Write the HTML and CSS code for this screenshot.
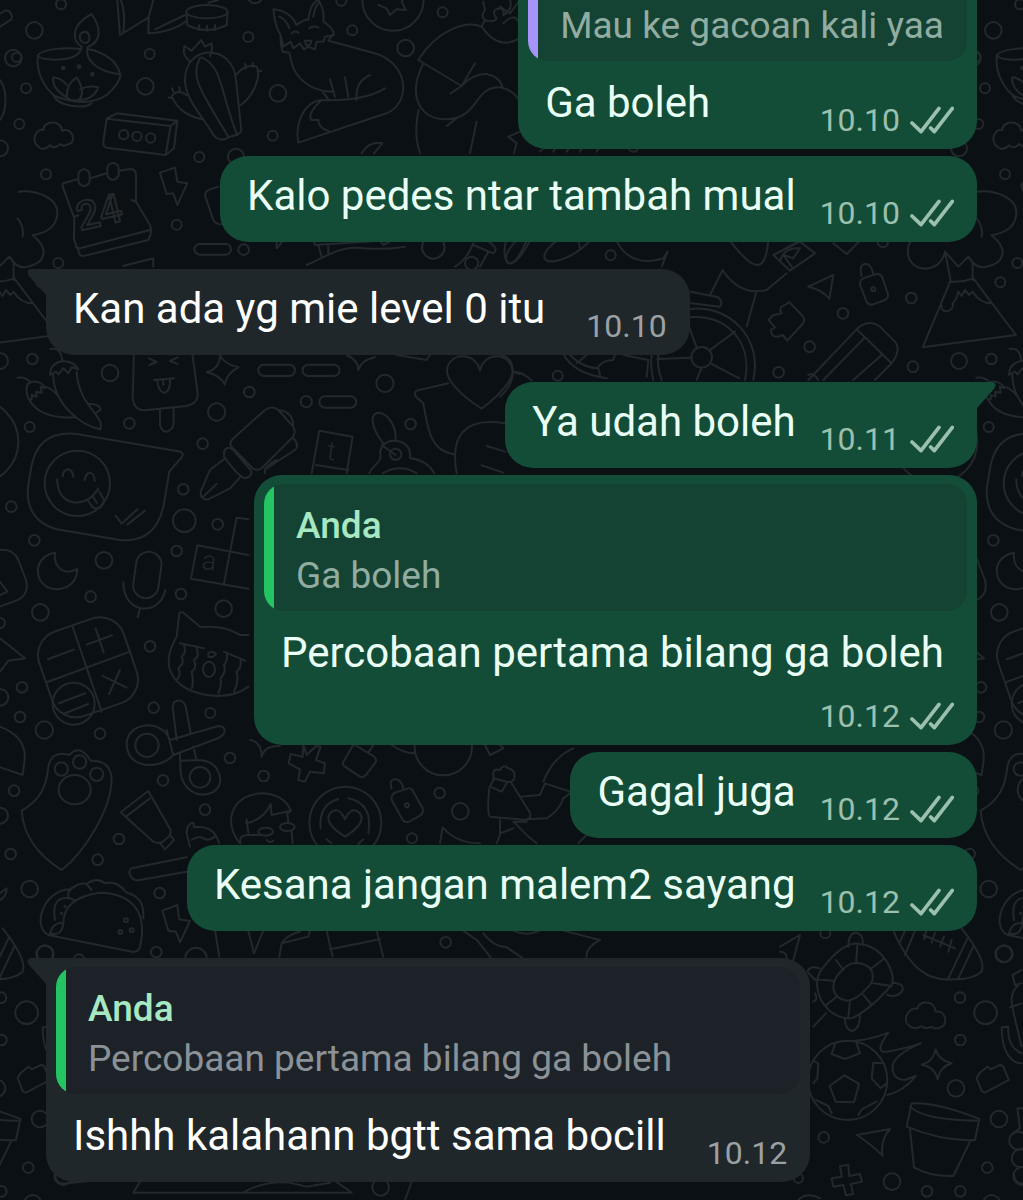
FILE: index.html
```html
<!DOCTYPE html>
<html lang="id">
<head>
  <meta charset="UTF-8" />
  <meta name="viewport" content="width=device-width, initial-scale=1.0" />
  <title>Chat</title>
  <link rel="stylesheet" href="styles.css">
</head>
<body>
  <!-- wallpaper doodles, the tile repeats every 959px -->
  <svg class="wallpaper" aria-hidden="true">
    <defs>
      <g id="doodles">
        <!-- top left -->
        <g transform="scale(.3333)">
          <circle cx="183" cy="13" r="15"/><circle cx="103" cy="91" r="25"/><circle cx="40" cy="174" r="25"/>
          <circle cx="449" cy="162" r="15"/><circle cx="436" cy="259" r="25"/><circle cx="78" cy="265" r="15"/>
          <circle cx="58" cy="372" r="15"/><circle cx="745" cy="111" r="15"/><circle cx="834" cy="280" r="25"/>
          <circle cx="818" cy="407" r="15"/><circle cx="598" cy="471" r="15"/><circle cx="708" cy="470" r="24"/>
          <circle cx="138" cy="523" r="15"/><circle cx="530" cy="674" r="15"/><circle cx="731" cy="749" r="16"/>
          <circle cx="175" cy="789" r="15"/><circle cx="1057" cy="91" r="15"/><circle cx="1217" cy="144" r="25"/>
          <circle cx="1328" cy="37" r="15"/><circle cx="1024" cy="2" r="15"/><circle cx="765" cy="-12" r="22"/>
          <circle cx="1300" cy="742" r="34"/><circle cx="0" cy="445" r="24"/>
          <path d="M0 40L15 32C30 28 40 48 34 58L0 80M0 240C22 270 22 330 0 360"/>
          <!-- oil lamp -->
          <path d="M245 140C215 120 212 75 275 42C305 85 305 125 262 142M241 120C235 100 248 95 258 95C270 102 272 118 262 128Q250 132 241 120M245 140Q240 180 160 179Q115 177 114 165C130 145 200 142 245 147M262 142C255 180 290 215 360 223C355 185 310 155 262 147M114 165C105 220 140 270 165 288Q260 325 320 285Q360 250 362 223M160 285C175 320 250 328 275 310M200 292Q155 265 160 232Q185 235 200 255M200 292Q200 250 230 232Q260 280 235 300Q215 305 200 292M240 270Q260 255 295 262Q280 300 235 300"/>
          <circle cx="190" cy="204" r="4"/><circle cx="237" cy="200" r="4"/><circle cx="277" cy="223" r="4"/>
          <!-- book and drum -->
          <path d="M352 0L360 105L446 52L460 0M446 52L445 100Q520 95 560 62M370 95Q378 40 362 0M465 88L555 45M625 8L655 0"/>
          <ellipse cx="621" cy="35" rx="62" ry="20"/>
          <path d="M559 35L562 75Q620 105 680 75L683 35M597 90V75M621 92V77M645 90V75"/>
          <!-- cactus -->
          <path d="M555 240C555 130 700 130 708 240L724 390Q722 405 690 410Q660 430 640 405C610 350 555 300 555 240M600 175C570 230 600 270 685 410M605 172C670 200 660 280 712 405M570 185C545 160 552 155 553 138L575 152L604 120L615 140L634 130Q640 150 630 168M708 225Q735 190 770 200C785 230 760 290 722 315M738 205L735 192M758 200V188M772 215L784 212M606 358C550 345 530 320 515 290Q530 265 560 285M520 275L516 265M540 272L538 262M515 295L506 292"/>
          <!-- cloud -->
          <path d="M115 440C90 420 110 385 130 390C130 360 185 360 186 392C220 380 230 430 205 432Q190 442 180 432Q165 450 150 436Q130 455 115 440"/>
          <!-- speaker box -->
          <path d="M320 356L512 378L497 465L320 443Q308 440 310 425ZM320 356L350 340L532 362L512 378M532 362L522 445L497 465"/>
          <circle cx="371" cy="404" r="14"/><circle cx="411" cy="409" r="14"/><circle cx="452" cy="414" r="14"/>
          <!-- calendar -->
          <path d="M232 538L190 550Q185 555 190 565L223 655L222 720L240 765Q245 770 255 767L445 720Q458 700 450 675L408 605V525Q408 507 390 507L358 512M270 535L320 520M228 742L240 745L450 690M222 650L235 646M395 600L408 605"/>
          <rect x="235" y="508" width="34" height="50" rx="17"/><rect x="322" y="489" width="34" height="50" rx="17"/>
          <text class="doodle-number" x="240" y="692" transform="rotate(-13 240 692)">24</text>
          <!-- bolt -->
          <path d="M480 518L525 503L532 545L562 550L532 615L520 580L500 582Z"/>
          <rect x="583" y="732" width="110" height="32" rx="16"/>
          <!-- fox -->
          <path d="M820 28Q870 32 890 75Q915 55 925 60Q930 10 955 0Q975 30 970 65Q995 80 1002 100L985 122Q1110 155 1135 163C1230 200 1230 310 1160 340L895 428C885 370 910 310 960 300Q1090 305 1155 265M820 28Q825 80 842 105Q840 130 848 155L868 158Q875 200 890 222Q930 275 1000 275M842 105L850 140L872 125L880 145L900 130L912 148L925 140L945 148L950 125L970 125L975 110L1002 105M960 305Q920 345 935 360H955Q955 385 985 392M990 238L1005 290M1035 232L1045 290M1110 225Q1065 245 1070 300M875 100Q885 90 895 98M928 85Q940 75 955 83M915 122H935Q932 140 918 135ZM838 50Q860 60 868 85M940 50Q945 20 955 10M970 278L985 298"/>
          <circle cx="1179" cy="0" r="92"/>
          <path d="M1135 15L1160 25L1170 45L1190 28L1218 30L1205 5L1215 -10"/>
          <!-- sleeping figure -->
          <path d="M1255 180C1310 90 1400 60 1445 80M1255 180L1385 258Q1420 220 1460 222Q1500 230 1508 262M1425 190L1385 258L1352 280M1270 190C1220 290 1260 360 1345 358C1440 350 1420 260 1500 262Q1540 270 1556 300M1340 378L1370 355M1256 330Q1240 400 1260 460M1430 365L1410 460M1445 80Q1480 130 1520 128Q1550 125 1560 110M1445 80L1455 60Q1440 50 1455 30L1450 5M1455 60Q1480 70 1490 55Q1470 30 1500 25Q1515 30 1510 45Q1540 30 1530 0"/>
          <path d="M1085 460Q1110 420 1147 430L1122 460M655 560L625 570Q610 580 618 595L640 660Q650 675 665 672"/>
          <path d="M830 720V745L850 722M940 722L945 735L1140 722M955 735L965 770M985 735V765M920 795C980 770 1020 735 1090 745Q1150 750 1215 740M1140 722L1150 735L1170 725M1365 800Q1400 780 1420 730M1440 800L1465 755M1420 735L1480 760Q1500 745 1460 722M1518 722Q1505 780 1530 790Q1550 790 1580 722"/>
          <circle cx="1415" cy="790" r="20"/>
        </g>

        <!-- between the bubbles, upper right -->
        <g transform="translate(500 0) scale(.3333)">
          <path d="M0 20L30 40L60 0M10 70Q50 30 60 80M25 410L60 395M25 410L50 430L42 460M120 455L135 440M160 455L170 440M200 455L210 440M240 455L250 440M290 455L300 440"/>
          <circle cx="1427" cy="172" r="14"/><circle cx="400" cy="440" r="15"/><circle cx="332" cy="766" r="15"/><circle cx="1149" cy="727" r="15"/>
          <!-- tree -->
          <path d="M1433 575C1480 570 1560 590 1548 650Q1540 695 1475 706C1530 750 1510 790 1460 800Q1430 810 1405 770L1375 800L1335 755C1320 830 1210 820 1225 740Q1228 725 1240 720M1430 655Q1450 680 1445 710M1335 755L1352 840M1418 790V840"/>
          <path d="M50 722C10 760 10 795 35 790Q60 780 90 722M170 722C110 770 130 795 180 780Q230 765 270 722M235 722L240 745M350 722C380 790 450 790 490 775L503 755L485 800M690 722Q760 815 785 790Q800 775 805 722M822 765L900 722M1000 730L1040 762L1080 722"/>
          <path d="M820 765L900 725L945 760L870 812ZM840 785Q850 740 900 745L880 775L850 765L875 800"/>
        </g>

        <!-- left, below the first grey bubble -->
        <g transform="translate(0 230) scale(.3333)">
          <circle cx="97" cy="387" r="16"/><circle cx="330" cy="429" r="25"/><circle cx="748" cy="486" r="16"/>
          <circle cx="650" cy="546" r="26"/><circle cx="919" cy="515" r="17"/><circle cx="1155" cy="460" r="26"/>
          <circle cx="1232" cy="582" r="16"/><circle cx="388" cy="580" r="16"/><circle cx="89" cy="591" r="15"/>
          <circle cx="608" cy="641" r="16"/><circle cx="0" cy="393" r="24"/><circle cx="-70" cy="635" r="125"/>
          <!-- chillies -->
          <path d="M152 357Q180 350 187 390M150 435Q150 400 187 393Q225 395 235 418L215 412L205 430L190 415L175 433L168 425ZM160 435C160 520 240 585 300 598C320 560 235 530 230 425M52 443Q80 440 92 458M80 490Q75 450 110 455Q130 460 135 475L122 470L125 488L108 485L110 500L95 495Q100 515 85 505ZM88 510C110 550 160 565 225 562M135 470Q155 475 172 495M265 522Q300 520 302 540L285 550"/>
          <!-- popsicle -->
          <path d="M402 370L398 500Q400 545 440 540L560 528Q595 520 593 490L577 370M480 540V585Q485 605 500 605Q520 600 521 580V535M447 385L470 396L448 405M533 382L510 393L533 402M462 450L522 445M472 450Q475 485 492 488Q512 485 510 447M490 450V465"/>
          <path d="M660 375Q668 400 715 412Q680 430 674 464Q660 435 620 427Q660 415 660 375M1040 375Q1075 390 1075 420Q1085 390 1125 382M1190 375L1280 390L1290 375"/>
          <rect x="775" y="404" width="110" height="34" rx="17"/><rect x="908" y="404" width="111" height="34" rx="17"/><rect x="958" y="499" width="111" height="34" rx="17"/>
          <!-- heart -->
          <path d="M1445 536C1380 495 1340 450 1341 420C1345 370 1425 360 1440 422C1455 360 1530 370 1538 420C1540 450 1500 495 1445 536M1345 460L1250 482Q1240 488 1248 500L1270 520C1285 600 1290 660 1360 673M1370 730C1350 620 1390 560 1515 580M1460 648L1515 665M1445 706L1510 728M1538 425L1560 432"/>
          <!-- marker pen -->
          <path d="M795 540Q815 525 835 540L880 590Q890 610 875 625L785 715Q765 725 755 712L695 650Q685 640 700 625ZM835 540Q880 545 880 590M880 625Q900 645 885 660L795 718M672 665Q680 645 700 660L752 720Q760 740 735 745Q715 740 672 680ZM675 685L630 720L602 785Q602 812 625 808L690 775L720 742M610 800L650 762"/>
          <path d="M958 602L1058 620L1040 730M958 602L935 730M948 705L1045 720"/>
          <text class="doodle-letter" x="978" y="688" transform="rotate(8 978 688)">t</text>
          <!-- rabbit -->
          <path d="M1150 640C1110 590 1110 550 1135 548C1165 550 1190 590 1187 632M1108 730C1120 700 1150 700 1140 665Q1150 630 1190 632Q1235 640 1230 685Q1280 690 1303 730M1148 730Q1200 700 1250 730M1145 645L1187 675"/>
          <circle cx="1187" cy="673" r="17"/><circle cx="550" cy="778" r="16"/>
          <path d="M370 108L460 85V110M795 730Q790 710 830 690"/>
        </g>

        <!-- middle right -->
        <g transform="translate(500 240) scale(.3333)">
          <circle cx="1234" cy="174" r="16"/><circle cx="1029" cy="220" r="16"/><circle cx="929" cy="320" r="16"/>
          <circle cx="836" cy="397" r="16"/><circle cx="1239" cy="380" r="16"/>
          <circle cx="1501" cy="127" r="15"/><circle cx="173" cy="407" r="15"/>
          <circle cx="1120" cy="148" r="6"/>
          <!-- mountain -->
          <path d="M1352 122L1268 322L1548 285L1420 115Q1385 128 1348 125M1325 195C1320 225 1365 215 1358 190Q1370 180 1375 155L1385 168L1395 150L1408 165L1418 155Q1440 190 1475 190"/>
          <!-- padlock, plane, puzzle, pencil -->
          <path d="M1085 108Q1075 70 1100 72Q1115 75 1120 102M1095 113L1130 102Q1142 100 1147 112L1164 162Q1166 175 1155 180L1118 194Q1105 196 1100 185L1080 135Q1078 118 1095 113"/>
          <path d="M925 140L1000 105L988 177Q970 150 925 140M820 225L845 220Q835 200 850 198L868 186L905 225Q920 240 905 255L862 302L848 285Q815 300 812 270L825 262L806 240Z"/>
          <path d="M925 420L1070 268Q1105 235 1140 260L1185 305Q1205 330 1175 370L1125 420M1070 268L1175 370M970 420L1095 292M1060 420L1145 345M925 405Q940 395 955 420"/>
          <!-- wheel -->
          <path d="M455 342Q450 380 460 420M475 342Q470 380 485 420M570 208C680 190 790 290 760 420M570 232C670 220 760 300 735 420M568 262L590 322M630 330L705 275M573 353L472 357M635 372L718 415M605 383L590 420"/>
          <circle cx="605" cy="352" r="31"/>
          <path d="M573 155L655 172Q670 185 660 200L573 190M630 165L668 90Q720 170 800 150L860 100M768 160L740 260M190 342Q220 400 320 415M210 345Q250 385 295 385L300 405M295 380Q310 360 340 360L345 342M230 370L260 345M370 345L445 360L440 410M0 345Q40 350 38 400Q35 440 0 470M38 395Q70 395 95 422"/>
        </g>

        <!-- left middle -->
        <g transform="translate(0 420) scale(.3333)">
          <circle cx="34" cy="260" r="16"/><circle cx="553" cy="302" r="34"/><circle cx="653" cy="313" r="16"/>
          <circle cx="103" cy="361" r="16"/><circle cx="312" cy="421" r="25"/><circle cx="530" cy="393" r="16"/>
          <circle cx="272" cy="530" r="16"/><circle cx="121" cy="577" r="25"/><circle cx="543" cy="522" r="16"/>
          <circle cx="671" cy="566" r="25"/><circle cx="450" cy="679" r="16"/><circle cx="66" cy="802" r="16"/>
          <circle cx="0" cy="832" r="25"/><circle cx="60" cy="891" r="16"/><circle cx="133" cy="930" r="26"/>
          <circle cx="300" cy="941" r="16"/><circle cx="461" cy="863" r="16"/><circle cx="631" cy="879" r="15"/><circle cx="0" cy="609" r="15"/>
          <!-- speech bubble with smiley -->
          <path d="M94 140Q115 30 230 42L535 94Q555 98 545 112L508 155L492 250Q470 370 360 360L170 328Q75 300 84 200Z"/>
          <circle cx="232" cy="190" r="98"/>
          <path d="M188 168Q190 148 205 148Q218 152 220 170M254 180Q258 158 270 158Q284 162 284 182M172 178C170 260 260 270 295 205M263 240L278 262Q305 275 312 240L298 215M278 228L290 248M347 288L365 311L412 268M382 314L435 272"/>
          <!-- microphone -->
          <rect x="404" y="395" width="76" height="140" rx="38" transform="rotate(8 442 465)"/>
          <path d="M370 487C370 585 480 590 496 510M420 566L413 592M165 398C90 410 100 510 175 508Q230 500 232 447C190 470 160 440 165 398"/>
          <path d="M0 390Q40 385 55 420L78 480Q90 530 40 545L0 560M0 485L22 515L0 525M0 655L75 715L25 722L0 755"/>
          <!-- calculator -->
          <rect x="130" y="608" width="268" height="268" rx="75" transform="rotate(-19 264 742)"/>
          <path d="M217 618L305 875M140 787L390 695M144 718L221 689M260 674L336 646M287 625L311 697M308 768L380 803M360 750L327 822M177 850L256 820M189 882L265 852"/>
          <circle cx="221" cy="851" r="63"/>
          <!-- letter tiles -->
          <path d="M592 376L745 405M592 376L573 476L745 506M710 293L672 490M710 293L745 298"/>
          <text class="doodle-letter" x="603" y="446" transform="rotate(8 603 446)">a</text>
          <!-- crying cat -->
          <path d="M530 650L538 580Q542 572 552 580L602 622Q670 615 720 645L745 645M530 650C470 750 530 820 650 828Q710 828 745 800M540 670L612 685M672 695L735 722M552 675Q560 700 545 710Q555 730 535 745Q545 765 530 780M590 685Q600 710 582 720Q592 745 575 755Q582 790 575 805M680 700Q685 720 672 735Q680 755 662 775Q665 800 655 820M722 720Q725 745 710 755Q718 780 702 815M625 700Q635 690 648 702Q640 715 625 710Z"/>
          <ellipse cx="627" cy="748" rx="18" ry="23"/>
          <!-- scissors -->
          <path d="M530 960L518 860Q520 840 540 842Q555 845 558 865L572 940M510 960L655 918Q680 920 672 940Q668 950 640 960L520 1005M500 930L520 1005C480 1050 380 1050 380 970C385 900 490 900 510 960M540 1000L542 1060C560 1160 690 1130 655 1055Q640 1020 590 1020L580 980M545 1022L590 1020"/>
          <circle cx="441" cy="976" r="35"/><circle cx="600" cy="1072" r="31"/><circle cx="690" cy="1014" r="16"/>
          <path d="M0 920Q80 950 74 1020L68 1065L0 1042"/>
        </g>

        <!-- lower left -->
        <g transform="translate(0 740) scale(.3333)">
          <circle cx="42" cy="152" r="16"/><circle cx="489" cy="121" r="16"/><circle cx="615" cy="209" r="16"/>
          <circle cx="357" cy="297" r="16"/><circle cx="293" cy="359" r="16"/><circle cx="32" cy="342" r="16"/>
          <circle cx="89" cy="447" r="25"/><circle cx="479" cy="459" r="16"/><circle cx="791" cy="108" r="16"/>
          <circle cx="469" cy="636" r="16"/><circle cx="134" cy="642" r="25"/><circle cx="0" cy="227" r="24"/><circle cx="588" cy="655" r="32"/><circle cx="237" cy="658" r="15"/>
          <!-- paw -->
          <path d="M65 212C120 180 140 140 145 80Q155 30 208 45Q240 10 272 62Q330 60 335 115C335 210 250 340 185 390C120 350 70 290 65 212"/>
          <circle cx="184" cy="87" r="20"/><circle cx="239" cy="66" r="20"/><circle cx="290" cy="103" r="20"/>
          <ellipse cx="224" cy="149" rx="48" ry="44"/>
          <!-- tube, brush -->
          <path d="M445 153L362 217L460 305Q480 315 495 300Q515 285 512 270ZM450 175L378 230M482 312L495 328L522 300L510 285M560 352L395 385Q385 390 390 405Q400 425 420 420L560 395M570 320L560 280Q560 250 580 248L582 262Q630 255 650 290L658 310M575 300Q600 285 610 295Q625 305 645 290"/>
          <!-- taco -->
          <path d="M145 585L400 636Q420 635 422 610C440 520 400 460 300 458C210 470 190 510 190 550M145 585C95 560 130 450 210 448Q240 425 260 432Q290 410 315 430Q350 420 380 458Q435 470 430 535M165 540Q155 480 190 475Q215 470 225 485M205 475Q200 450 225 440M150 580Q160 545 190 550Q185 590 150 580M262 435L275 450"/>
          <circle cx="378" cy="541" r="6"/><circle cx="361" cy="576" r="6"/><circle cx="395" cy="571" r="6"/><circle cx="185" cy="520" r="2"/><circle cx="195" cy="500" r="2"/>
          <path d="M487 512L532 495L537 538L570 543L540 607L528 575L505 572ZM0 460L20 445Q20 470 0 480"/>
          <!-- cross, person -->
          <path d="M910 15L920 45L948 18L962 20L948 60L975 70L972 100L930 95L915 125L895 120L900 88L866 70L872 42L908 50Z"/>
          <path d="M720 310C670 250 690 170 780 160Q850 160 873 212L862 220L865 250M740 238L745 278M738 250Q790 240 812 192L815 225L873 212M722 310Q715 285 745 285L780 285M875 275L878 310M800 300Q810 310 820 302"/>
          <ellipse cx="797" cy="275" rx="22" ry="12"/><ellipse cx="862" cy="261" rx="22" ry="12"/>
          <path d="M750 0Q785 5 785 50Q795 15 840 18M645 570L658 650M745 572L762 640L790 572M838 650L845 610L925 590L930 572M848 605Q870 580 900 575M980 572L998 650M990 628L1140 598M1130 572L1150 650"/>
        </g>

        <!-- lower middle -->
        <g transform="translate(280 720) scale(.3333)">
          <circle cx="479" cy="219" r="16"/><circle cx="541" cy="274" r="25"/><circle cx="396" cy="355" r="15"/><circle cx="497" cy="667" r="16"/><circle cx="381" cy="256" r="6"/><circle cx="490" cy="80" r="86"/>
          <circle cx="196" cy="308" r="108"/>
          <path d="M195 350Q130 310 150 280Q175 255 195 298Q215 255 240 280Q260 310 195 350M122 325Q115 255 175 237M205 235Q280 250 265 340M140 358L155 370M250 358L235 372"/>
          <path d="M335 205Q325 175 350 178Q365 182 370 205M345 218L385 205Q395 203 400 215L428 265Q432 280 420 287L388 305Q375 310 367 298L335 240Q333 225 345 218"/>
          <path d="M220 75L190 125Q185 135 195 140L240 170Q250 175 258 165L288 125Q290 115 280 108L225 75M265 98L280 75M335 75Q370 100 405 100M615 75L630 105L670 85L660 75"/>
          <!-- sitting figure -->
          <path d="M640 160Q640 145 660 150Q670 130 685 145Q705 150 704 170Q700 190 680 185L640 175ZM640 180L630 200L665 215L680 190M628 205Q620 280 630 290L740 300Q760 290 745 270L695 190M720 230L780 225L795 190Q810 195 870 215M790 185Q820 110 880 85M740 298L800 295Q840 270 850 235L870 220M660 300V345L650 370M740 305L700 305L745 350L770 370M660 340L700 325M480 370L488 322Q530 370 600 370M895 370L920 345"/>
          <path d="M550 632L590 660L632 712M610 640Q640 680 680 682L725 712M700 632Q740 650 780 632M850 632L960 660Q915 685 920 712"/>
        </g>

        <!-- bottom right -->
        <g transform="translate(780 920) scale(.3333)">
          <circle cx="136" cy="40" r="15"/><circle cx="673" cy="101" r="25"/><circle cx="540" cy="233" r="16"/>
          <circle cx="617" cy="278" r="34"/><circle cx="541" cy="360" r="16"/><circle cx="528" cy="505" r="25"/>
          <circle cx="657" cy="597" r="25"/><circle cx="131" cy="652" r="16"/><circle cx="622" cy="743" r="16"/>
          <circle cx="336" cy="785" r="25"/><circle cx="441" cy="814" r="16"/><circle cx="541" cy="814" r="16"/><circle cx="635" cy="850" r="25"/><circle cx="55" cy="775" r="14"/>
          <!-- turtle -->
          <path d="M120 155Q190 60 240 72C310 80 350 160 335 195Q270 270 215 295C140 300 90 210 120 155M170 170Q205 120 240 130C290 140 285 185 260 205Q230 240 200 242C160 235 150 200 170 170M205 80Q205 38 230 38Q252 45 248 75M338 188Q372 190 368 210Q355 235 322 225M195 298Q195 330 218 333Q240 325 240 285M118 145Q90 135 82 155L105 180M232 75L228 130M168 120L190 150M310 118L275 145M105 178L160 182M280 190L335 198M250 225L272 252M210 242L205 292M168 232L135 258M100 245Q115 240 105 220M100 320L138 280"/>
          <!-- rugby ball -->
          <path d="M340 32C390 150 450 185 520 178Q580 178 605 155Q620 120 545 25M358 70L375 32M375 105L405 32M505 175L565 50M535 175L580 80M430 45L525 85M440 30L432 58M465 38L455 68M492 50L480 80M515 60L505 95"/>
          <path d="M0 80L60 45L40 120M0 95Q20 95 20 115M725 150L698 165L705 195L725 190M715 195C680 230 695 250 725 380M690 262L725 250M665 322L685 320Q680 380 725 400M665 322C665 390 690 430 725 430M712 565H729M712 565L720 625L700 640"/>
          <!-- cloud -->
          <path d="M395 322C360 305 385 260 412 266C415 240 465 240 467 275C500 270 505 320 480 322Q465 330 455 320Q435 330 425 318Q410 328 395 322"/>
          <!-- flaming football -->
          <circle cx="203" cy="481" r="119"/>
          <path d="M193 466L237 492L222 547L167 545L149 498ZM165 372L155 402L195 417L240 400L230 370M310 430L280 428L275 475L302 505L320 490M105 425L115 430L112 475L100 490M108 540L145 558L155 580M235 585L245 568L290 545M225 362Q270 360 325 338Q280 400 320 395Q380 385 422 370Q350 400 338 435Q335 480 375 480L408 468Q370 515 322 525"/>
          <path d="M467 388Q475 420 515 430Q480 440 473 478Q465 440 425 434Q460 425 467 388M598 460L622 440L632 448L660 435Q670 435 672 445L687 480L615 518Q605 518 602 505L590 475Z"/>
          <!-- flower pot -->
          <path d="M395 550Q470 545 598 597L585 660Q490 665 380 620ZM390 560Q430 600 590 602M390 628L402 742Q450 770 520 768L570 665"/>
          <path d="M230 645L330 627Q300 660 308 707Q270 670 230 645M180 738L205 735L208 768L240 762L246 785L212 792L220 822L198 826L190 795L160 800L155 775L185 770ZM55 840Q80 815 120 835"/>
          <circle cx="715" cy="662" r="27"/><circle cx="722" cy="715" r="27"/><circle cx="727" cy="768" r="27"/>
        </g>

        <!-- bottom edge -->
        <g transform="translate(0 940) scale(.3333)">
          <path d="M420 726L400 758H1055L1010 726M730 758Q780 726 860 726L920 740L990 728M1235 726L1215 780M165 700Q165 735 200 730L260 724"/>
          <circle cx="1142" cy="742" r="25"/>
        </g>
      </g>
    </defs>
    <use href="#doodles" x="-959"/>
    <use href="#doodles"/>
    <use href="#doodles" x="959"/>

    <symbol id="ticks" viewBox="0 0 132 84">
      <path d="M6 51L33 77L87 7M62 66L73 77L127 7"/>
    </symbol>
  </svg>

  <main class="chat">
    <div class="message sent">
      <div class="quote contact">
        <p class="quote-text">Mau ke gacoan kali yaa</p>
      </div>
      <div class="content">
        <p class="text">Ga boleh</p>
        <div class="meta"><time>10.10</time><svg class="ticks"><use href="#ticks"/></svg></div>
      </div>
    </div>

    <div class="message sent">
      <div class="content">
        <p class="text">Kalo pedes ntar tambah mual</p>
        <div class="meta"><time>10.10</time><svg class="ticks"><use href="#ticks"/></svg></div>
      </div>
    </div>

    <div class="message received first">
      <div class="content">
        <p class="text">Kan ada yg mie level 0 itu</p>
        <div class="meta"><time>10.10</time></div>
      </div>
    </div>

    <div class="message sent first">
      <div class="content">
        <p class="text">Ya udah boleh</p>
        <div class="meta"><time>10.11</time><svg class="ticks"><use href="#ticks"/></svg></div>
      </div>
    </div>

    <div class="message sent">
      <div class="quote">
        <p class="quote-name">Anda</p>
        <p class="quote-text">Ga boleh</p>
      </div>
      <div class="content stacked">
        <p class="text">Percobaan pertama bilang ga boleh</p>
        <div class="meta"><time>10.12</time><svg class="ticks"><use href="#ticks"/></svg></div>
      </div>
    </div>

    <div class="message sent">
      <div class="content">
        <p class="text">Gagal juga</p>
        <div class="meta"><time>10.12</time><svg class="ticks"><use href="#ticks"/></svg></div>
      </div>
    </div>

    <div class="message sent">
      <div class="content">
        <p class="text">Kesana jangan malem2 sayang</p>
        <div class="meta"><time>10.12</time><svg class="ticks"><use href="#ticks"/></svg></div>
      </div>
    </div>

    <div class="message received first">
      <div class="quote">
        <p class="quote-name">Anda</p>
        <p class="quote-text">Percobaan pertama bilang ga boleh</p>
      </div>
      <div class="content">
        <p class="text">Ishhh kalahann bgtt sama bocill</p>
        <div class="meta"><time>10.12</time></div>
      </div>
    </div>
  </main>
</body>
</html>
```
FILE: styles.css
```css
* {
  box-sizing: border-box;
}
body {
  margin: 0;
  background: #0b1014;
  color: #fff;
  font-family: Roboto, sans-serif;
  overflow: hidden;
}
p {
  margin: 0;
}
.wallpaper {
  position: absolute;
  inset: 0;
  width: 100%;
  height: 100%;
  z-index: -1;
  fill: none;
  stroke: #23282c;
  stroke-width: 6;
  stroke-linejoin: round;
  stroke-linecap: round;
}
.doodle-number {
  font-size: 120px;
  font-weight: 500;
}
.doodle-letter {
  font-size: 80px;
  font-weight: 300;
  fill: #23282c;
  stroke: none;
}

/* newest message stays at the bottom */
.chat {
  display: flex;
  flex-direction: column;
  justify-content: flex-end;
  gap: 7px;
  height: 100vh;
  padding: 0 46px 18px;
}
.message {
  position: relative;
  flex-shrink: 0;
  border-radius: 28px;
  max-width: 90%;
}
.sent {
  align-self: flex-end;
  background: #144d37;
}
.received {
  align-self: flex-start;
  background: #1f272a;
}
.first {
  margin-top: 20px;
}

/* bubble tails */
.first::before {
  content: "";
  position: absolute;
  top: 0;
  width: 48px;
  height: 28px;
  background: inherit;
}
.sent.first::before {
  right: -19px;
  clip-path: path("M0 0H44Q50 1 46 7L29 26V28H0Z");
}
.received.first::before {
  left: -19px;
  clip-path: path("M48 0H4Q-2 1 2 7L19 26V28H48Z");
}

.quote {
  position: relative;
  display: flex;
  flex-direction: column;
  justify-content: flex-end;
  min-height: 127px;
  margin: 9px 10px 0;
  padding: 0 23px 10px 32px;
  border-radius: 20px;
  overflow: hidden;
  background: #144233;
}
.quote::before {
  content: "";
  position: absolute;
  left: 0;
  top: 0;
  bottom: 0;
  width: 10px;
  background: #25c463;
}
.quote.contact::before {
  background: #a794fb;
}
.received .quote {
  background: #1c2228;
}
.quote-name,
.quote-text {
  font-size: 37px;
  line-height: 50px;
}
.quote-name {
  color: #a6e8c2;
  font-weight: 500;
}
.quote-text {
  color: #91ada2;
}
.received .quote-text {
  color: #8b9297;
}

.content {
  display: flex;
  justify-content: space-between;
  align-items: flex-end;
  gap: 24px;
  padding: 15px 23px 11px 27px;
}
.quote + .content {
  padding-top: 17px;
}
.received .content {
  gap: 41px;
}
.text {
  padding-bottom: 10px;
  font-size: 42px;
  line-height: 50px;
}
.sent .text {
  color: #eafff5;
}
.content.stacked {
  flex-direction: column;
  gap: 10px;
}
.stacked .text {
  padding-right: 10px;
}
.meta {
  display: flex;
  align-items: center;
  gap: 10px;
  color: #9ba1a4;
  font-size: 32px;
  line-height: 36px;
}
.sent .meta {
  color: #9cc0ae;
}
.ticks {
  width: 44px;
  height: 28px;
  fill: none;
  stroke: currentColor;
  stroke-width: 11;
  stroke-linecap: round;
  stroke-linejoin: round;
}
```
